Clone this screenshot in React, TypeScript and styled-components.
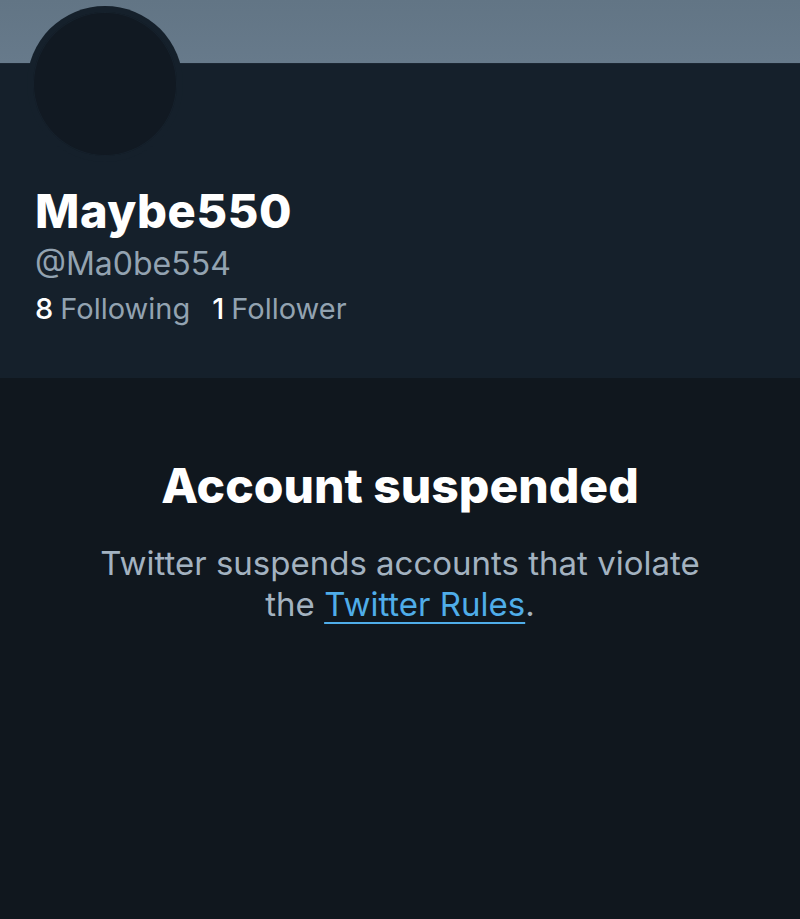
import React from 'react';
import styled, { createGlobalStyle } from 'styled-components';

const GlobalStyle = createGlobalStyle`
  html, body {
    margin: 0;
    padding: 0;
    background: #10171e;
  }
  body {
    font-family: Inter, "Liberation Sans", Arial, sans-serif;
    -webkit-font-smoothing: antialiased;
  }
`;

const Page = styled.div`
  width: 800px;
  min-height: 919px;
  background: #10171e;
  display: flex;
  flex-direction: column;
`;

const Banner = styled.div`
  height: 63px;
  background: linear-gradient(180deg, #627585 0%, #677a8b 100%);
  border-bottom: 1px solid #1c2733;
`;

const ProfileCard = styled.div`
  background: #15202b;
  height: 314px;
  padding: 0 35px;
  display: flex;
  flex-direction: column;
  position: relative;
`;

const Avatar = styled.div`
  position: absolute;
  left: 27px;
  top: -58px;
  width: 156px;
  height: 156px;
  border-radius: 50%;
  background: #15202b;
  display: flex;
  align-items: center;
  justify-content: center;

  &::after {
    content: '';
    width: 144px;
    height: 144px;
    border-radius: 50%;
    background: #111922;
    box-shadow: inset 0 0 0 1px #16212c;
  }
`;

const Name = styled.h1`
  margin: 121px 0 0;
  font-size: 47px;
  line-height: 52px;
  font-weight: 800;
  color: #ffffff;
  letter-spacing: 0.6px;
`;

const Handle = styled.div`
  margin-top: 9px;
  font-size: 32px;
  line-height: 36px;
  color: #93a3b1;
`;

const Stats = styled.div`
  margin-top: 10px;
  display: flex;
  gap: 22px;
  font-size: 29px;
  line-height: 34px;
`;

const Stat = styled.span`
  color: #93a3b1;

  b {
    color: #ffffff;
    font-weight: 500;
    margin-right: 7px;
  }
`;

const Notice = styled.div`
  display: flex;
  flex-direction: column;
  align-items: center;
  text-align: center;
  padding-top: 80px;
`;

const Title = styled.h2`
  margin: 0;
  font-size: 48px;
  line-height: 56px;
  font-weight: 800;
  color: #ffffff;
`;

const Body = styled.p`
  margin: 29px 0 0;
  font-size: 33px;
  line-height: 41px;
  color: #a3b2c0;
  max-width: 640px;
`;

const RulesLink = styled.a`
  color: #4fade9;
  text-decoration: underline;
  text-underline-offset: 6px;
  text-decoration-thickness: 2px;
`;

const stats = [
  { count: 8, label: 'Following' },
  { count: 1, label: 'Follower' },
];

export default function App() {
  return (
    <>
      <GlobalStyle />
      <Page>
        <Banner />
        <ProfileCard>
          <Avatar />
          <Name>Maybe550</Name>
          <Handle>@Ma0be554</Handle>
          <Stats>
            {stats.map(({ count, label }) => (
              <Stat key={label}>
                <b>{count}</b>
                {label}
              </Stat>
            ))}
          </Stats>
        </ProfileCard>
        <Notice>
          <Title>Account suspended</Title>
          <Body>
            Twitter suspends accounts that violate
            <br />
            the <RulesLink href="#">Twitter Rules</RulesLink>.
          </Body>
        </Notice>
      </Page>
    </>
  );
}
